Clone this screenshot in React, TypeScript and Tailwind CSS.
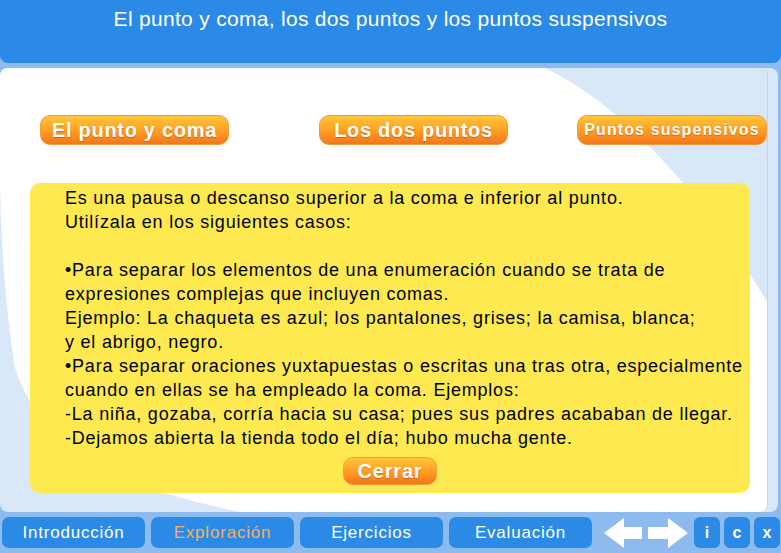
import React from "react";

const btn =
  "flex items-center justify-center rounded-[10px] border border-[#f59a3c] bg-[linear-gradient(to_bottom,#ffc63c_0%,#ffa424_45%,#f4761a_100%)] text-white font-bold [text-shadow:0_1px_1px_rgba(160,60,0,0.45)]";

const tab =
  "flex items-center justify-center h-[31px] w-[143px] rounded-[7px] bg-[#2b8ae6] text-[17px] tracking-[0.8px]";

const sq =
  "flex items-center justify-center h-[31px] w-[26px] rounded-[6px] bg-[#2b8ae6] text-white font-bold text-[16px]";

export default function App() {
  return (
    <div
      className="w-[781px] h-[553px] overflow-hidden bg-[#8ebbee] flex flex-col"
      style={{ fontFamily: '"Liberation Sans", Arial, sans-serif' }}
    >
      <div className="h-[63px] shrink-0 bg-[#2b8ae6] rounded-b-[8px] text-white text-[21px] tracking-[0.3px] text-center pt-[5px] leading-[28px]">
        El punto y coma, los dos puntos y los puntos suspensivos
      </div>
      <div className="mt-[5px] mr-[3px] h-[444px] shrink-0 rounded-[8px] overflow-hidden bg-[#d8e8f8] flex">
        <div className="relative w-[768px] h-[444px] rounded-r-[8px] overflow-hidden border-r border-[#bcd4ee]">
          <svg
            className="absolute inset-0"
            width="768"
            height="444"
            viewBox="0 0 768 444"
          >
            <path
              d="M0,0 H545 C625,38 705,130 768,235 V444 H240 C150,425 45,395 15,300 C5,240 0,160 0,100 Z"
              fill="#ffffff"
            />
          </svg>
          <div className="relative flex flex-col">
            <div className="flex mt-[47px] h-[30px]">
              <div className={btn + " ml-[40px] w-[190px] text-[20px] tracking-[0.7px]"}>El punto y coma</div>
              <div className={btn + " ml-[90px] w-[190px] text-[20px] tracking-[0.7px]"}>Los dos puntos</div>
              <div className={btn + " ml-[69px] w-[191px] text-[16px] tracking-[1.1px]"}>Puntos suspensivos</div>
            </div>
            <div className="mt-[38px] ml-[30px] w-[720px] h-[310px] rounded-[10px] bg-[#feea50] flex flex-col">
              <div className="pl-[35px] pt-[3px] text-[18px] tracking-[0.78px] leading-[24px] text-black whitespace-nowrap">
                <div>Es una pausa o descanso superior a la coma e inferior al punto.</div>
                <div>Utilízala en los siguientes casos:</div>
                <div>&nbsp;</div>
                <div>•Para separar los elementos de una enumeración cuando se trata de</div>
                <div>expresiones complejas que incluyen comas.</div>
                <div>Ejemplo: La chaqueta es azul; los pantalones, grises; la camisa, blanca;</div>
                <div>y el abrigo, negro.</div>
                <div>•Para separar oraciones yuxtapuestas o escritas una tras otra, especialmente</div>
                <div>cuando en ellas se ha empleado la coma. Ejemplos:</div>
                <div>-La niña, gozaba, corría hacia su casa; pues sus padres acababan de llegar.</div>
                <div>-Dejamos abierta la tienda todo el día; hubo mucha gente.</div>
              </div>
              <div className="flex justify-center mt-[7px]">
                <div className={btn + " w-[94px] h-[28px] text-[20px] tracking-[0.8px]"}>Cerrar</div>
              </div>
            </div>
          </div>
        </div>
        <div className="flex-1" />
      </div>
      <div className="flex items-center h-[41px] pl-[2px] gap-[6px]">
        <div className={tab + " text-white"}>Introducción</div>
        <div className={tab + " text-[#f6b062]"}>Exploración</div>
        <div className={tab + " text-white"}>Ejercicios</div>
        <div className={tab + " text-white"}>Evaluación</div>
        <svg width="84" height="32" viewBox="0 0 84 32" className="ml-[6px]">
          <path d="M0,16 L20,1 L20,10 L38,10 L38,22 L20,22 L20,31 Z" fill="#ffffff" />
          <path d="M84,16 L64,1 L64,10 L44,10 L44,22 L64,22 L64,31 Z" fill="#ffffff" />
        </svg>
        <div className="flex gap-[4px] ml-[0px]">
          <div className={sq}>i</div>
          <div className={sq}>c</div>
          <div className={sq}>x</div>
        </div>
      </div>
    </div>
  );
}
